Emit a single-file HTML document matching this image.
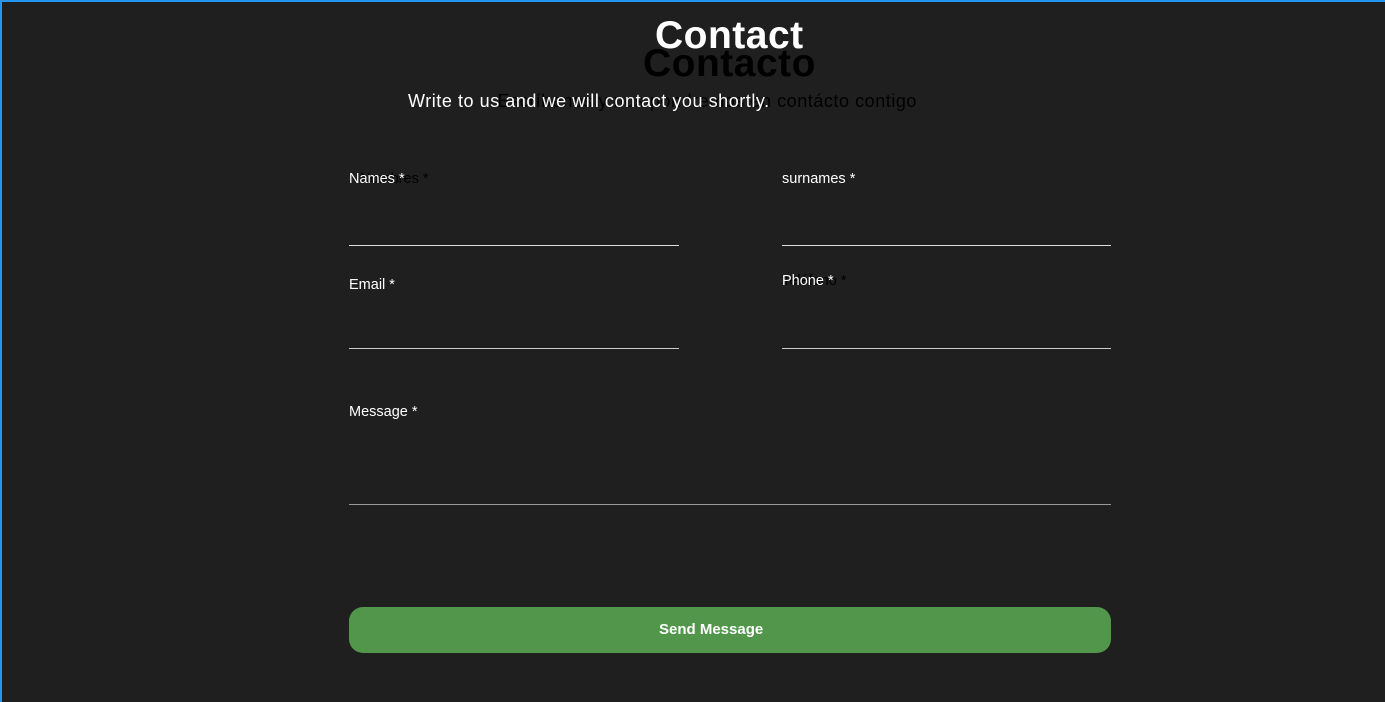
<!DOCTYPE html>
<html><head><meta charset="utf-8"><style>
*{margin:0;padding:0;box-sizing:border-box}
body{width:1385px;height:702px;background:#1f1f1f;overflow:hidden;position:relative;font-family:"Liberation Sans",sans-serif}
.a{position:absolute;white-space:nowrap}
.h{font-weight:bold;font-size:39px;letter-spacing:0.5px}
.w{color:#fff}.k{color:#000}
.s{font-size:18px;letter-spacing:0.55px}
.l{font-size:14.5px}
.line{position:absolute;height:1px;background:#ddd}
.btn{position:absolute;left:349px;top:607px;width:762px;height:46px;border-radius:14px;background:#52964c}
</style></head><body>
<div style="position:absolute;left:0;top:0;width:1385px;height:2px;background:#2196f3"></div>
<div style="position:absolute;left:0;top:0;width:2px;height:702px;background:#2196f3"></div>
<div class="a h k" style="left:643px;top:42px">Contacto</div>
<div class="a h w" style="left:655px;top:14px">Contact</div>
<div class="a s k" style="right:468px;top:91px">Escríbenos y nos pondremos en contácto contigo</div>
<div class="a s w" style="left:408px;top:91px">Write to us and we will contact you shortly.</div>
<div class="a l k" style="left:360px;top:171px">Nombres *</div>
<div class="a l w" style="left:349px;top:171px">Names *</div>
<div class="a l w" style="left:782px;top:171px">surnames *</div>
<div class="line" style="left:349px;top:245px;width:330px"></div>
<div class="line" style="left:782px;top:245px;width:329px"></div>
<div class="a l w" style="left:349px;top:277px">Email *</div>
<div class="a l k" style="left:782px;top:273px">Teléfono *</div>
<div class="a l w" style="left:782px;top:273px">Phone *</div>
<div class="line" style="left:349px;top:348px;width:330px;background:#ccc"></div>
<div class="line" style="left:782px;top:348px;width:329px;background:#ccc"></div>
<div class="a l w" style="left:349px;top:404px">Message *</div>
<div class="line" style="left:349px;top:504px;width:762px;background:#999"></div>
<div class="btn"></div>
<div class="a w" style="left:659px;top:621px;font-weight:bold;font-size:15px">Send Message</div>
</body></html>
